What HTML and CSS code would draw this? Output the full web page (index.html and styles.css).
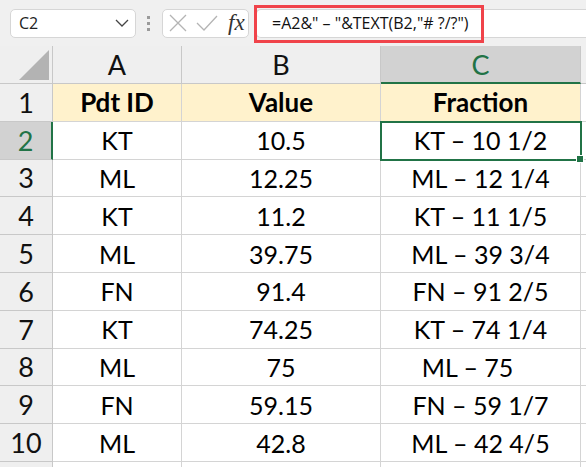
FILE: index.html
```html
<!DOCTYPE html>
<html lang="en">
<head>
  <meta charset="UTF-8">
  <title>Fraction</title>
  <link rel="stylesheet" href="styles.css">
</head>
<body>
  <div class="toolbar">
    <div class="name-box">
      <span>C2</span>
      <svg width="14" height="8" viewBox="0 0 14 8"><path d="M1 1 L7 7 L13 1" fill="none" stroke="#444" stroke-width="1.3"/></svg>
    </div>
    <div class="grip"><i></i><i></i><i></i></div>
    <div class="fx-box">
      <svg width="18" height="18" viewBox="0 0 18 18"><path d="M1 1 L17 17 M17 1 L1 17" stroke="#b4b4b4" stroke-width="1.3"/></svg>
      <svg width="22" height="16" viewBox="0 0 22 16"><path d="M1 8 L8 15 L21 1" fill="none" stroke="#b4b4b4" stroke-width="1.3"/></svg>
      <span class="fx">fx</span>
    </div>
    <div class="formula">
      <span class="formula-text">=A2&amp;" – "&amp;TEXT(B2,"# ?/?")</span>
    </div>
  </div>

  <div class="sheet">
    <div class="corner"><span class="tri"></span></div>
    <div class="col-head">A</div>
    <div class="col-head">B</div>
    <div class="col-head sel">C</div>
    <div class="col-head rest"></div>

    <div class="row-head">1</div>
    <div class="cell title">Pdt ID</div>
    <div class="cell title">Value</div>
    <div class="cell title">Fraction</div>
    <div class="cell rest"></div>

    <div class="row-head sel">2</div>
    <div class="cell">KT</div>
    <div class="cell">10.5</div>
    <div class="cell active">KT – 10 1/2<span class="handle"></span></div>
    <div class="cell rest"></div>

    <div class="row-head">3</div>
    <div class="cell">ML</div>
    <div class="cell">12.25</div>
    <div class="cell">ML – 12 1/4</div>
    <div class="cell rest"></div>

    <div class="row-head">4</div>
    <div class="cell">KT</div>
    <div class="cell">11.2</div>
    <div class="cell">KT – 11 1/5</div>
    <div class="cell rest"></div>

    <div class="row-head">5</div>
    <div class="cell">ML</div>
    <div class="cell">39.75</div>
    <div class="cell">ML – 39 3/4</div>
    <div class="cell rest"></div>

    <div class="row-head">6</div>
    <div class="cell">FN</div>
    <div class="cell">91.4</div>
    <div class="cell">FN – 91 2/5</div>
    <div class="cell rest"></div>

    <div class="row-head">7</div>
    <div class="cell">KT</div>
    <div class="cell">74.25</div>
    <div class="cell">KT – 74 1/4</div>
    <div class="cell rest"></div>

    <div class="row-head">8</div>
    <div class="cell">ML</div>
    <div class="cell">75</div>
    <div class="cell whole">ML – 75</div>
    <div class="cell rest"></div>

    <div class="row-head">9</div>
    <div class="cell">FN</div>
    <div class="cell">59.15</div>
    <div class="cell">FN – 59 1/7</div>
    <div class="cell rest"></div>

    <div class="row-head">10</div>
    <div class="cell">ML</div>
    <div class="cell">42.8</div>
    <div class="cell">ML – 42 4/5</div>
    <div class="cell rest"></div>

    <div class="row-head"></div>
    <div class="cell"></div>
    <div class="cell"></div>
    <div class="cell"></div>
    <div class="cell rest"></div>
  </div>
</body>
</html>
```

FILE: styles.css
```css
body {
  margin: 0;
  width: 586px;
  height: 467px;
  overflow: hidden;
  background: #fff;
  font-family: Lato, "Open Sans", sans-serif;
}
.toolbar {
  height: 46px;
  background: #f0f0f0;
  display: flex;
  align-items: center;
  padding-left: 10px;
  box-sizing: border-box;
}
.name-box {
  width: 126px;
  height: 29px;
  box-sizing: border-box;
  background: #fff;
  border: 1px solid #d6d6d6;
  border-radius: 5px;
  display: flex;
  align-items: center;
  justify-content: space-between;
  padding: 0 6px 0 8px;
  font-family: "Open Sans", sans-serif;
  font-size: 16px;
  color: #222;
}
.grip {
  width: 4px;
  margin: 0 11px 0 11px;
  display: flex;
  flex-direction: column;
  gap: 3px;
}
.grip i {
  width: 3px;
  height: 3px;
  background: #9a9a9a;
}
.fx-box {
  width: 87px;
  height: 29px;
  box-sizing: border-box;
  background: #fff;
  border: 1px solid #d6d6d6;
  border-radius: 5px;
  display: flex;
  align-items: center;
  gap: 9px;
  padding-left: 6px;
}
.fx {
  font-family: "Liberation Serif", serif;
  font-style: italic;
  font-size: 23px;
  color: #333;
  margin-left: 1px;
}
.formula {
  flex: 1;
  height: 29px;
  margin-left: 7px;
  box-sizing: border-box;
  background: #fff;
  border: 1px solid #d6d6d6;
  border-right: none;
  border-radius: 5px 0 0 5px;
  display: flex;
  align-items: center;
  position: relative;
}
.formula::after {
  content: "";
  position: absolute;
  left: -3px;
  top: -5px;
  width: 224px;
  height: 32px;
  border: 3px solid #f0434a;
}
.formula-text {
  padding-left: 15px;
  font-family: "Open Sans", sans-serif;
  font-size: 16px;
  color: #111;
}
.sheet {
  display: grid;
  grid-template-columns: 53px 129px 199px 200px 1fr;
  grid-template-rows: 38px repeat(10, 37.8px) 20px;
}
.corner,
.col-head,
.row-head {
  background: #efefef;
  border-right: 1px solid #c8c8c8;
  border-bottom: 1px solid #c8c8c8;
  display: flex;
  align-items: center;
  justify-content: center;
  font-size: 27px;
  color: #111;
}
.corner {
  position: relative;
}
.tri {
  position: absolute;
  right: 3px;
  bottom: 3px;
  width: 30px;
  height: 30px;
  background: #b3b3b3;
  clip-path: polygon(100% 0, 100% 100%, 0 100%);
}
.col-head.sel {
  background: #d2d2d2;
  color: #217346;
  border-bottom: 2px solid #217346;
}
.col-head.rest {
  background: #f0f0f0;
  border-right: none;
}
.row-head.sel {
  background: #d2d2d2;
  color: #217346;
  border-right: 2px solid #217346;
}
.cell {
  border-right: 1px solid #d4d4d4;
  border-bottom: 1px solid #d4d4d4;
  display: flex;
  align-items: center;
  justify-content: center;
  font-size: 25px;
  color: #000;
  white-space: pre;
  position: relative;
}
.cell.title {
  background: #fff2cc;
  font-weight: bold;
  font-size: 26px;
}
.cell.rest {
  border-right: none;
}
.cell.whole {
  padding-right: 26px;
}
.cell.active {
  outline: 2px solid #217346;
  outline-offset: -1px;
  z-index: 2;
}
.handle {
  position: absolute;
  right: -4px;
  bottom: -4px;
  width: 6px;
  height: 6px;
  background: #217346;
  border: 1px solid #fff;
}
```
